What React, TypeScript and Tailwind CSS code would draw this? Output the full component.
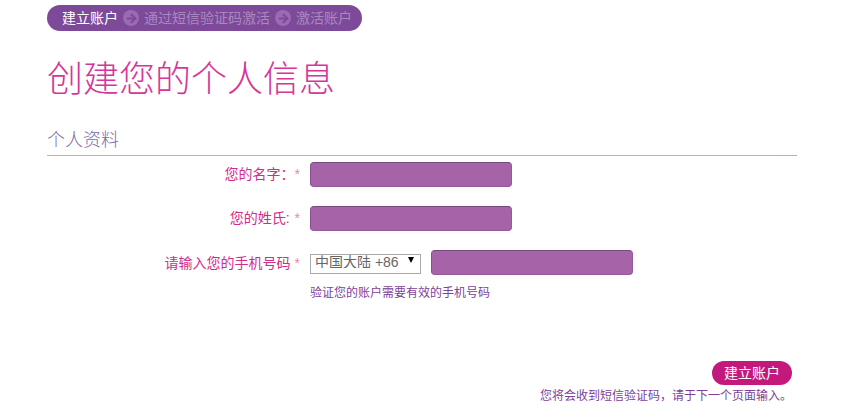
import { ArrowRight } from "lucide-react";

const font = { fontFamily: '"Liberation Sans", "Noto Sans CJK SC", sans-serif' };

function StepArrow() {
  return (
    <span className="mx-[5px] flex h-4 w-4 items-center justify-center rounded-full bg-[#9a6bb3] text-[#7d4a9a]">
      <ArrowRight className="h-[13px] w-[13px]" strokeWidth={4} />
    </span>
  );
}

function TextBox({ className = "" }: { className?: string }) {
  return (
    <input className={`h-[25px] w-[202px] rounded-[4px] border border-[#95599a] border-t-[#754a80] border-l-[#85508f] bg-[#a763a8] ${className}`} />
  );
}

function Field({ label, gap, className = "" }: { label: string; gap: string; className?: string }) {
  return (
    <div className={`flex items-start ${className}`}>
      <label className="w-[253px] pt-[2px] text-right text-sm leading-5 text-[#d42a8c]">
        {label}
        <span className={`${gap} text-[#e58abf]`}>*</span>
      </label>
      <TextBox className="ml-[10px]" />
    </div>
  );
}

export default function App() {
  return (
    <div style={font} className="h-[417px] w-[841px] overflow-hidden bg-white pl-[47px] pt-[5px]">
      <div className="flex h-[26px] w-[315px] items-center rounded-[13px] bg-[#7d4a9a] pl-[15px] text-sm">
        <span className="text-white">建立账户</span>
        <StepArrow />
        <span className="text-[#a988c0]">通过短信验证码激活</span>
        <StepArrow />
        <span className="text-[#a988c0]">激活账户</span>
      </div>

      <h1 className="mt-[24px] text-[36px] leading-[50px] font-extralight text-[#d6369a]">创建您的个人信息</h1>

      <div className="mt-[23px] w-[750px] border-b border-[#c9a8bd] pb-[3px] text-lg leading-[24px] font-light text-[#7d6aa8]">
        个人资料
      </div>

      <Field label="您的名字：" gap="ml-0" className="mt-[6px]" />
      <Field label="您的姓氏:" gap="ml-[5px]" className="mt-[19px]" />

      <div className="mt-[19px] flex items-start">
        <label className="w-[253px] pt-[3px] text-right text-sm leading-5 text-[#d42a8c]">
          请输入您的手机号码
          <span className="ml-1 text-[#e58abf]">*</span>
        </label>
        <div className="ml-[10px]">
          <div className="flex items-start">
            <div className="relative h-5 w-[111px]">
              <select className="h-5 w-full appearance-none border border-[#a9a9a9] bg-white pb-[5px] pl-[4px] text-sm leading-[14px] text-[#666]">
                <option>中国大陆 +86</option>
              </select>
              <span className="pointer-events-none absolute top-[7px] right-[7px] h-0 w-0 border-x-[3.5px] border-t-[6px] border-x-transparent border-t-black" />
            </div>
            <TextBox className="ml-[10px]" />
          </div>
          <p className="mt-[10px] text-xs leading-4 text-[#7d3f98]">验证您的账户需要有效的手机号码</p>
        </div>
      </div>

      <div className="mt-[60px] flex w-[745px] flex-col items-end">
        <button className="h-6 w-20 rounded-xl bg-[#c4197c] text-sm text-white">建立账户</button>
        <p className="mt-[3px] text-xs leading-4 text-[#7d3f98]">您将会收到短信验证码，请于下一个页面输入。</p>
      </div>
    </div>
  );
}
